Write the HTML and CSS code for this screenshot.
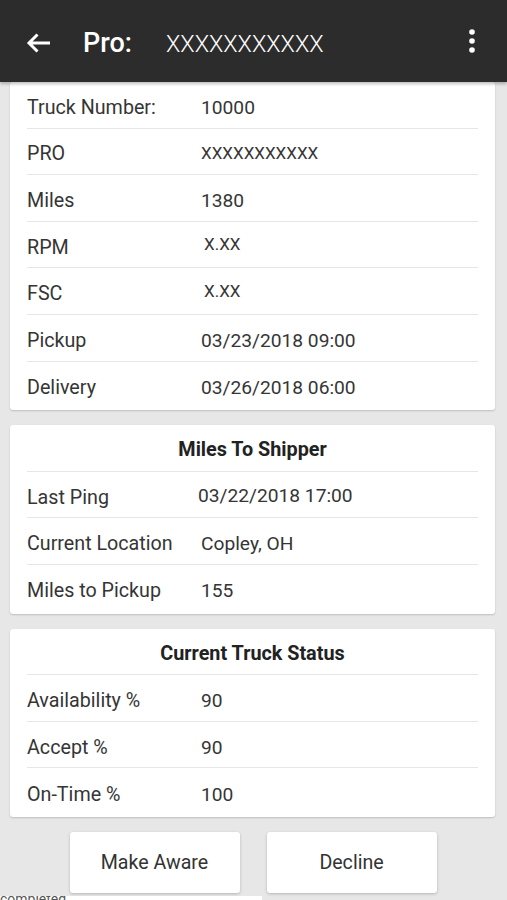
FILE: index.html
```html
<!DOCTYPE html>
<html lang="en">

<head>
  <meta charset="UTF-8" />
  <title>Pro Details</title>
  <link rel="stylesheet" href="styles.css">
</head>

<body>

  <!-- App bar -->
  <header class="appbar">
    <button class="icon-btn back" aria-label="Back">
      <svg width="26" height="22" viewBox="0 0 26 22">
        <path d="M24 11H3M11.5 2.5L3 11l8.5 8.5" fill="none" stroke="#fff" stroke-width="3" />
      </svg>
    </button>
    <h1 class="title">
      <span class="title-label">Pro:</span>
      <span class="title-value">XXXXXXXXXXX</span>
    </h1>
    <button class="icon-btn menu" aria-label="More">
      <svg width="8" height="26" viewBox="0 0 8 26">
        <circle cx="4" cy="4" r="2.8" fill="#fff" />
        <circle cx="4" cy="13" r="2.8" fill="#fff" />
        <circle cx="4" cy="22" r="2.8" fill="#fff" />
      </svg>
    </button>
  </header>

  <main class="content">

    <!-- Load info -->
    <section class="card">
      <div class="row"><span class="label">Truck Number:</span><span class="value">10000</span></div>
      <div class="row"><span class="label">PRO</span><span class="value small">XXXXXXXXXXX</span></div>
      <div class="row"><span class="label">Miles</span><span class="value">1380</span></div>
      <div class="row"><span class="label">RPM</span><span class="value small shift">X.XX</span></div>
      <div class="row"><span class="label">FSC</span><span class="value small shift">X.XX</span></div>
      <div class="row"><span class="label">Pickup</span><span class="value">03/23/2018 09:00</span></div>
      <div class="row"><span class="label">Delivery</span><span class="value">03/26/2018 06:00</span></div>
    </section>

    <!-- Miles to shipper -->
    <section class="card">
      <h2 class="card-title">Miles To Shipper</h2>
      <div class="row"><span class="label">Last Ping</span><span class="value up">03/22/2018 17:00</span></div>
      <div class="row"><span class="label">Current Location</span><span class="value">Copley, OH</span></div>
      <div class="row"><span class="label">Miles to Pickup</span><span class="value">155</span></div>
    </section>

    <!-- Truck status -->
    <section class="card">
      <h2 class="card-title">Current Truck Status</h2>
      <div class="row"><span class="label">Availability %</span><span class="value">90</span></div>
      <div class="row"><span class="label">Accept %</span><span class="value">90</span></div>
      <div class="row"><span class="label">On-Time %</span><span class="value">100</span></div>
    </section>

    <div class="actions">
      <button class="action-btn">Make Aware</button>
      <button class="action-btn">Decline</button>
    </div>
  </main>

  <div class="toast">completed</div>

</body>

</html>
```

FILE: styles.css
```css
html,
body {
  margin: 0;
  height: 900px;
  overflow: hidden;
}

body {
  font-family: Roboto, "Noto Sans", sans-serif;
  background: #e7e7e7;
  color: #353535;
  position: relative;
}

.appbar {
  height: 82px;
  background: #2c2c2c;
  display: flex;
  align-items: center;
  padding: 4px 31px 0 26px;
  box-shadow: 0 2px 3px rgba(0, 0, 0, 0.25);
  position: relative;
  z-index: 1;
  box-sizing: border-box;
}

.icon-btn {
  background: none;
  border: 0;
  padding: 0;
  display: flex;
}

.title {
  flex: 1;
  margin: 0 0 0 31px;
  color: #fff;
  font-weight: normal;
  display: flex;
  align-items: baseline;
}

.title-label {
  font-size: 27px;
  font-weight: 500;
  width: 83px;
}

.title-value {
  font-size: 23.4px;
  font-weight: 300;
}

.menu {
  margin-top: -4px;
}

.content {
  padding: 0 12px 0 10px;
}

.card {
  background: #fff;
  border-radius: 3px;
  box-shadow: 0 1px 2px rgba(0, 0, 0, 0.18);
  padding: 0 17px 2px;
  margin-bottom: 15px;
}

.card-title {
  margin: 0;
  height: 46.6px;
  box-sizing: border-box;
  border-bottom: 1px solid #e6e6e6;
  display: flex;
  align-items: center;
  justify-content: center;
  font-size: 19.8px;
  font-weight: bold;
  color: #222;
  padding-top: 4px;
}

.row {
  display: grid;
  grid-template-columns: 174px 1fr;
  align-items: center;
  height: 46.6px;
  box-sizing: border-box;
  border-bottom: 1px solid #e6e6e6;
  font-size: 19.2px;
  padding-top: 5px;
}

.row:last-child {
  border-bottom: 0;
}

.label {
  font-size: 19.7px;
}

.value.small {
  font-size: 17px;
  margin-top: -2px;
}

.value.shift {
  padding-left: 3px;
  margin-top: -6px;
}

.value.up {
  margin-top: -4px;
  margin-left: -3px;
}

.actions {
  display: flex;
  justify-content: center;
  gap: 27px;
  padding-left: 1px;
}

.action-btn {
  width: 170px;
  height: 61px;
  background: #fff;
  border: 0;
  border-radius: 3px;
  box-shadow: 0 1px 3px rgba(0, 0, 0, 0.22);
  font-family: Roboto, "Noto Sans", sans-serif;
  font-size: 19.6px;
  color: #333;
}

.toast {
  position: absolute;
  left: 0;
  top: 896px;
  width: 262px;
  height: 24px;
  background: #fff;
  font-size: 14px;
  color: #555;
  line-height: 6px;
  overflow: hidden;
}
```
